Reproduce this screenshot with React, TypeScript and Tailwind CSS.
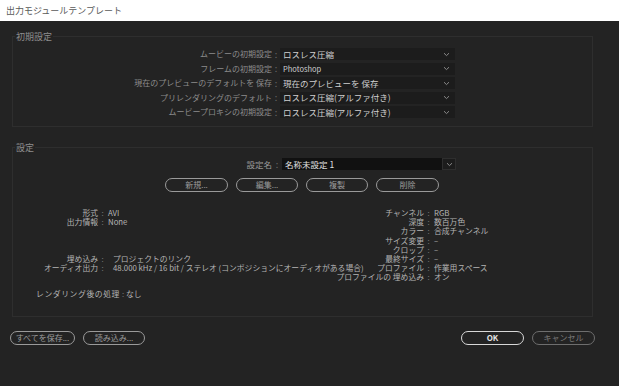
import React from "react";

const font = { fontFamily: '"Noto Sans CJK JP", "Noto Sans", sans-serif' };

const Chevron: React.FC = () => (
  <svg width="7" height="5" viewBox="0 0 7 5" className="shrink-0">
    <path d="M1 1.2 L3.5 3.6 L6 1.2" fill="none" stroke="#8a8a8a" strokeWidth="1" />
  </svg>
);

const defaults = [
  ["ムービーの初期設定", "ロスレス圧縮"],
  ["フレームの初期設定", "Photoshop"],
  ["現在のプレビューのデフォルトを 保存", "現在のプレビューを 保存"],
  ["プリレンダリングのデフォルト", "ロスレス圧縮(アルファ付き)"],
  ["ムービープロキシの初期設定", "ロスレス圧縮(アルファ付き)"],
];

// each line: [left label, left value, right label, right value]
const info: [string, string, string, string][] = [
  ["形式", "AVI", "チャンネル", "RGB"],
  ["出力情報", "None", "深度", "数百万色"],
  ["", "", "カラー", "合成チャンネル"],
  ["", "", "サイズ変更", "–"],
  ["", "", "クロップ", "–"],
  ["埋め込み", "プロジェクトのリンク", "最終サイズ", "–"],
  ["オーディオ出力", "48.000 kHz / 16 bit / ステレオ (コンポジションにオーディオがある場合)", "プロファイル", "作業用スペース"],
  ["", "", "プロファイルの 埋め込み", "オン"],
];

const Pill: React.FC<{ label: string; w: string; tone?: "ok" | "off" | "normal" }> = ({ label, w, tone = "normal" }) => {
  const cls =
    tone === "ok"
      ? "border-[#d8d8d8] text-[#e0e0e0] font-bold"
      : tone === "off"
      ? "border-[#6e6e6e] text-[#7a7a7a]"
      : "border-[#9a9a9a] text-[#9c9c9c]";
  return (
    <div className={`${w} h-[14px] rounded-full border-[1.5px] ${cls} flex items-center justify-center text-[8px] leading-none`}>
      {label}
    </div>
  );
};

const App: React.FC = () => {
  return (
    <div style={font} className="w-[619px] h-[386px] bg-[#232323] flex flex-col overflow-hidden">
      <div className="h-[21px] bg-white flex items-center px-[6px] text-[9px] text-[#5a5a5a] shrink-0">
        出力モジュールテンプレート
      </div>

      <fieldset className="ml-[12px] mt-[10px] w-[581px] border border-[#2e2e2e] pt-[6px] pb-[8px]">
        <legend className="ml-[2px] px-[1px] text-[9px] leading-[11px] text-[#8e8e8e]">初期設定</legend>
        <div className="flex flex-col gap-[2.5px]">
          {defaults.map(([label, value]) => (
            <div key={label} className="flex items-center h-[12px]">
              <div className="w-[259px] text-right text-[8px] leading-none text-[#8c8c8c] whitespace-nowrap">{label}</div>
              <div className="w-[8px] text-center text-[9px] leading-none text-[#6a6a6a]">:</div>
              <div className="w-[175px] h-[12px] bg-[#1c1c1c] flex items-center pl-[3px] pr-[5px]">
                <span className={`flex-1 leading-none text-[#cfcfcf] ${value === "Photoshop" ? "text-[7.5px]" : "text-[8.5px]"}`}>{value}</span>
                <Chevron />
              </div>
            </div>
          ))}
        </div>
      </fieldset>

      <fieldset className="ml-[12px] mt-[15px] w-[581px] border border-[#2e2e2e] pt-[5px] pb-[18px]">
        <legend className="ml-[2px] px-[1px] text-[9px] leading-[11px] text-[#8e8e8e]">設定</legend>

        <div className="flex items-center h-[12px]">
          <div className="w-[259px] text-right text-[8.5px] leading-none text-[#9a9a9a]">設定名</div>
          <div className="w-[10px] text-center text-[9px] leading-none text-[#6a6a6a]">:</div>
          <div className="w-[160px] h-[12px] bg-[#111111] flex items-center pl-[3px]">
            <span className="text-[8.5px] leading-none text-[#e0e0e0]">名称未設定 1</span>
          </div>
          <div className="w-[14px] h-[12px] bg-[#1c1c1c] border border-[#2e2e2e] flex items-center justify-center">
            <Chevron />
          </div>
        </div>

        <div className="flex gap-[8px] ml-[152px] mt-[8px]">
          <Pill label="新規..." w="w-[63px]" />
          <Pill label="編集..." w="w-[62px]" />
          <Pill label="複製" w="w-[62px]" />
          <Pill label="削除" w="w-[63px]" />
        </div>

        <div className="flex flex-col mt-[16px] text-[7.8px] leading-[9.2px] text-[#b4b4b4]">
          {info.map(([ll, lv, rl, rv], i) => (
            <div key={i} className="flex h-[9.2px] whitespace-nowrap">
              <div className="w-[317px] shrink-0 flex">
                <span className="w-[85px] shrink-0 text-right">{ll}</span>
                <span className="w-[9px] shrink-0 text-center text-[#777]">{ll ? ":" : ""}</span>
                <span className={`shrink-0 ${i >= 5 ? "ml-[6px]" : "ml-[1px]"}`}>{lv}</span>
              </div>
              <span className="w-[94px] shrink-0 text-right">{rl}</span>
              <span className="w-[9px] shrink-0 text-center text-[#777]">:</span>
              <span className="ml-[1px] shrink-0">{rv}</span>
            </div>
          ))}
          <div className="flex h-[9.2px] mt-[7px] whitespace-nowrap">
            <span className="w-[107px] shrink-0 text-right tracking-[0.6px]">レンダリング後の処理</span>
            <span className="w-[6px] shrink-0 text-center text-[#777]">:</span>
            <span>なし</span>
          </div>
        </div>
      </fieldset>

      <div className="flex items-center mt-[14px] px-[10px]">
        <div className="flex gap-[8px]">
          <Pill label="すべてを保存..." w="w-[65px]" />
          <Pill label="読み込み..." w="w-[62px]" />
        </div>
        <div className="flex gap-[8px] ml-auto mr-[14px]">
          <Pill label="OK" w="w-[63px]" tone="ok" />
          <Pill label="キャンセル" w="w-[63px]" tone="off" />
        </div>
      </div>
    </div>
  );
};

export default App;
